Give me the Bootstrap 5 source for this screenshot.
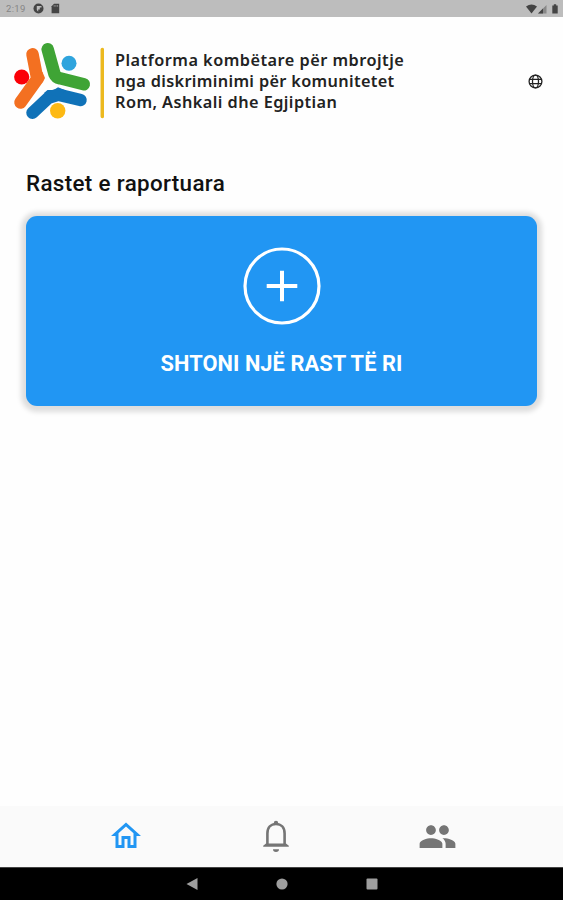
<!DOCTYPE html>
<html lang="sq">
<head>
<meta charset="utf-8">
<meta name="viewport" content="width=device-width, initial-scale=1">
<title>Rastet e raportuara</title>
<link href="https://cdn.jsdelivr.net/npm/bootstrap@5.3.0/dist/css/bootstrap.min.css" rel="stylesheet">
<style>
body{font-family:Roboto,sans-serif;background:#fefefe;color:#111}
svg{display:block;flex:none}
.screen{height:900px;overflow:hidden}
.status{height:17px;background:#bdbdbd;color:#858585;font-size:9.5px;letter-spacing:.3px;line-height:17px;padding:0 5px 0 6px}
.status-left{gap:7px}
.status-right{gap:1px}
.brand{height:131px;padding-right:20px}
.brand-title{font:600 16.3px/21px "Noto Sans",sans-serif;color:#222;margin:0 0 0 11px;padding-bottom:2px}
.brand-title span{display:block;white-space:nowrap}
.l1{letter-spacing:.48px}.l2{letter-spacing:.34px}.l3{letter-spacing:.44px}
.globe{margin-bottom:2px}
.section-title{font-size:22.4px;font-weight:500;letter-spacing:.34px;line-height:26px;margin:22px 0 20px 26px}
.add-case{height:190px;width:511px;margin:0 26px;border:0;border-radius:11px;background:#2196f3;box-shadow:0 1px 5px 5px rgba(0,0,0,.13);padding-top:30px}
.add-label{font-size:21.8px;font-weight:700;letter-spacing:.07px;line-height:26px;margin-top:25px}
.tabs{height:61px;background:#fafafa;padding:0 106px 1px 108px;color:#757575}
.tabs .current{color:#2196f3}
.bell{margin-right:11px}
.system{height:33px;background:#000;gap:78px;border-top:1px solid #444}
</style>
</head>
<body>
<div class="screen d-flex flex-column">
  <div class="status d-flex align-items-center justify-content-between">
    <div class="status-left d-flex align-items-center">
      <span>2:19</span>
      <svg width="11" height="11" viewBox="0 0 11 11"><circle cx="5.500" cy="5.500" r="5" fill="#444"/><path d="M3.800 3h4.700v1.600H6.800v1.800H5.200v2.400L3.800 7z" fill="#bdbdbd"/></svg>
      <svg width="9" height="11" viewBox="0 0 9 11"><path d="M3 .8h5.200v9.400H.6V3.200z" fill="#444"/><path d="M3.200 2v1.800M4.900 2v1.800M6.600 2v1.800" stroke="#999" stroke-width=".8"/></svg>
    </div>
    <div class="status-right d-flex align-items-center">
      <svg width="11" height="10" viewBox="0 0 11 10"><path d="M0 2.600Q5.500-1.600 11 2.600L5.500 9.500z" fill="#444"/></svg>
      <svg width="9" height="10" viewBox="0 0 9 10"><path d="M0 9.500L8.500 1v8.500z" fill="#888"/><path d="M0 9.500l5-5v5z" fill="#444"/></svg>
      <svg class="ms-1" width="6" height="10" viewBox="0 0 6 10"><path d="M.3 1.400h1.500V.3h2.400v1.100h1.500v8.200H.3z" fill="#444"/></svg>
    </div>
  </div>

  <header class="brand d-flex align-items-center">
    <svg width="104" height="131" viewBox="0 17 104 131">
      <g fill="none" stroke-width="12.500" stroke-linecap="round" stroke-linejoin="round">
        <path d="M32.500 54.300L37.300 79 20.500 102.500" stroke="#f37021"/>
        <path d="M47.700 49.300L54.500 74Q56 77.500 60 78.300L83.800 84.300" stroke="#3fa435"/>
        <path d="M32.500 112.700L48.500 97.700 58 94.700 80.500 100" stroke="#1072b8"/>
      </g>
      <path d="M42.500 72L45 78 43 82 37 87V72z" fill="#f37021"/>
      <path d="M44 93L47.500 90 54 90 58 87.300 66 90.500 60 97z" fill="#1072b8"/>
      <circle cx="21.700" cy="77" r="7.600" fill="#fb0007"/>
      <circle cx="69" cy="63.300" r="7.500" fill="#2fa4dd"/>
      <circle cx="57.700" cy="110.700" r="7.700" fill="#fdb913"/>
      <path d="M102.300 49.500v67" stroke="#ecb91f" stroke-width="3.500" stroke-linecap="round"/>
    </svg>
    <h1 class="brand-title"><span class="l1">Platforma kombëtare për mbrojtje</span><span class="l2">nga diskriminimi për komunitetet</span><span class="l3">Rom, Ashkali dhe Egjiptian</span></h1>
    <svg class="globe ms-auto" width="15" height="15" viewBox="0 0 15 15" fill="none" stroke="#222" stroke-width="1.300"><circle cx="7.500" cy="7.500" r="6.400"/><ellipse cx="7.500" cy="7.500" rx="3" ry="6.400"/><path d="M1.600 5.300h11.800M1.600 9.700h11.800"/></svg>
  </header>

  <main class="flex-grow-1">
    <h2 class="section-title">Rastet e raportuara</h2>
    <button class="add-case btn d-flex flex-column align-items-center text-white">
      <svg width="80" height="80" viewBox="0 0 80 80" fill="none" stroke="#fff"><circle cx="40" cy="40" r="37" stroke-width="3.200"/><path d="M40 24.700v30.600M24.700 40h30.600" stroke-width="4"/></svg>
      <span class="add-label">SHTONI NJË RAST TË RI</span>
    </button>
  </main>

  <nav class="tabs d-flex align-items-center justify-content-between">
    <svg class="current" width="36" height="36" viewBox="0 0 24 24" fill="currentColor"><path d="M12 5.690l5 4.500V18h-2v-6H9v6H7v-7.810l5-4.500M12 3L2 12h3v8h6v-6h2v6h6v-8h3L12 3z"/></svg>
    <svg class="bell" width="36" height="36" viewBox="0 0 36 36"><path d="M9.400 27V15.500C9.400 9.500 13 6 18 6s8.600 3.500 8.600 9.500V27" fill="none" stroke="#757575" stroke-width="2.600"/><path d="M5.200 28.800v-1L8 25.500h20l2.800 2.300v1zM15.800 6.500V5a2.200 2.200 0 0 1 4.400 0v1.500zM15 31.300h6a3 2.600 0 0 1-6 0z" fill="#757575"/></svg>
    <svg width="39" height="39" viewBox="0 0 24 24" fill="currentColor"><path d="M16 11c1.660 0 2.990-1.340 2.990-3S17.660 5 16 5s-3 1.340-3 3 1.340 3 3 3zm-8 0c1.660 0 2.990-1.340 2.990-3S9.660 5 8 5 5 6.340 5 8s1.340 3 3 3zm0 2c-2.330 0-7 1.170-7 3.500V19h14v-2.500c0-2.330-4.670-3.500-7-3.500zm8 0c-.290 0-.620.020-.970.050 1.160.840 1.970 1.970 1.970 3.450V19h6v-2.500c0-2.330-4.670-3.500-7-3.500z"/></svg>
  </nav>

  <div class="system d-flex align-items-center justify-content-center">
    <svg width="12" height="14" viewBox="0 0 12 14"><path d="M11.500 1v12L.5 7z" fill="#9e9e9e"/></svg>
    <svg width="12" height="12" viewBox="0 0 12 12"><circle cx="6" cy="6" r="5.600" fill="#9e9e9e"/></svg>
    <svg width="12" height="12" viewBox="0 0 12 12"><rect x=".5" y=".5" width="11" height="11" rx="1" fill="#9e9e9e"/></svg>
  </div>
</div>
<script src="https://cdn.jsdelivr.net/npm/bootstrap@5.3.0/dist/js/bootstrap.bundle.min.js"></script>
</body>
</html>
